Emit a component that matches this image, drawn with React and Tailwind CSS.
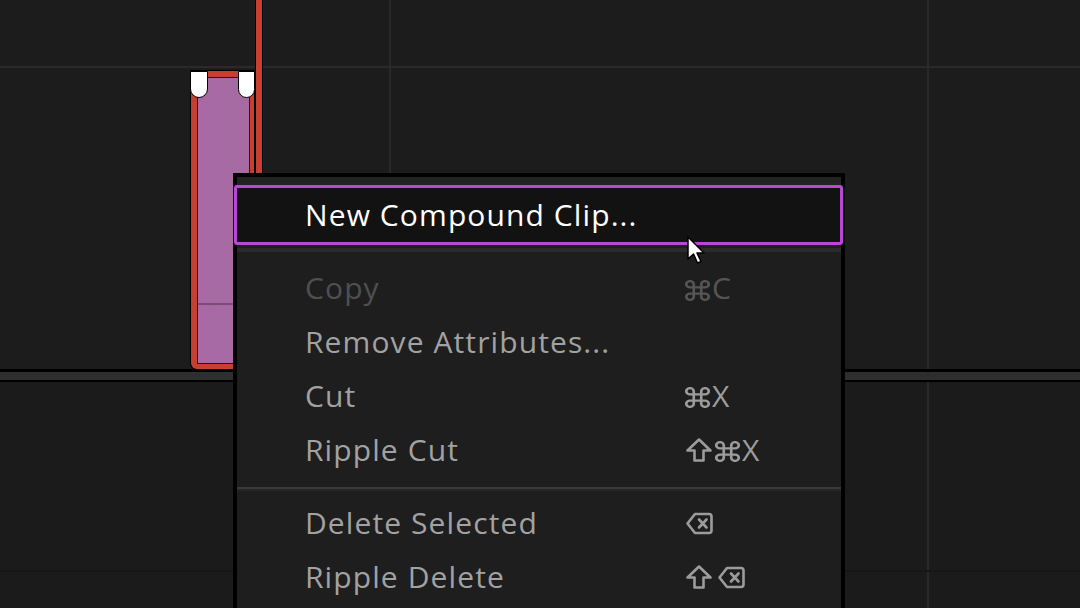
const GridCols = ({ className }) => (
  <div className={className}>
    <div className="w-[389px]" />
    <div className="w-[2px] bg-[#292929]" />
    <div className="w-[536px]" />
    <div className="w-[2px] bg-[#292929]" />
    <div className="flex-1" />
  </div>
);

// ⌘
const Cmd = ({ className }) => (
  <svg className={className} width="25" height="21" viewBox="2 2 20 20" preserveAspectRatio="none" fill="none" stroke="currentColor" strokeWidth="2.1" strokeLinecap="round" strokeLinejoin="round">
    <path d="M15 6v12a3 3 0 1 0 3-3H6a3 3 0 1 0 3 3V6a3 3 0 1 0-3 3h12a3 3 0 1 0-3-3" />
  </svg>
);

// ⇧
const Shift = ({ className }) => (
  <svg className={className} width="28" height="26" viewBox="0 0 28 26" fill="none" stroke="currentColor" strokeWidth="2.6" strokeLinejoin="round">
    <path d="M14 2.5 L25.5 13.5 L18.5 13.5 L18.5 23.5 L9.5 23.5 L9.5 13.5 L2.5 13.5 Z" />
  </svg>
);

// ⌫
const Back = ({ className }) => (
  <svg className={className} width="29" height="25" viewBox="0 0 29 25" fill="none" stroke="currentColor" strokeWidth="2.6" strokeLinecap="round" strokeLinejoin="round">
    <path d="M2.5 12.5 L10 3 H24 a2.5 2.5 0 0 1 2.5 2.5 V19.5 a2.5 2.5 0 0 1 -2.5 2.5 H10 Z" />
    <path d="M14 8.5 L21.5 16.5 M21.5 8.5 L14 16.5" />
  </svg>
);

const Item = ({ label, disabled, children }) => (
  <div className={`flex h-[54px] items-center pl-[68px] text-[30px] leading-[54px] tracking-[1.1px] ${disabled ? "text-[#4f4f4f]" : "text-[#a2a2a2]"}`}>
    <div className="w-[380px]">{label}</div>
    <div className={`flex items-center tracking-normal ${disabled ? "text-[#555555]" : "text-[#9c9c9c]"}`}>{children}</div>
  </div>
);

export default function App() {
  return (
    <div className="relative flex h-[608px] w-[1080px] flex-col overflow-hidden bg-[#1c1c1c] font-['Open_Sans','Noto_Sans',sans-serif]">
      <GridCols className="flex h-[66px]" />
      <div className="h-[2px] bg-[#2a2a2a]" />
      <GridCols className="flex h-[301px]" />
      <div className="h-[3px] bg-black" />
      <div className="h-[8px] bg-[#2e2e2e]" />
      <div className="h-[2px] bg-black" />
      <GridCols className="flex h-[188px] bg-[#1b1b1b]" />
      <div className="h-[2px] bg-[#171717]" />
      <GridCols className="flex flex-1 bg-[#1b1b1b]" />

      {/* playhead */}
      <div className="absolute left-[255px] top-0 h-[176px] w-[8px] bg-black px-[1px]">
        <div className="h-full bg-[#c7402f]" />
      </div>

      {/* clip */}
      <div className="absolute left-[190px] top-[70px] h-[300px] w-[65px] rounded-bl-[7px] bg-black p-[1px]">
        <div className="h-full rounded-bl-[6px] bg-[#c7402f] pb-[5px] pl-[6px] pr-[4px] pt-[6px]">
          <div className="flex h-full flex-col border-[1.5px] border-[#2a1226] bg-gradient-to-r from-[#a868a5] to-[#a56ba2]">
            <div className="flex-1" />
            <div className="h-[2px] bg-[#7e4b79]" />
            <div className="h-[58px]" />
          </div>
        </div>
        <div className="absolute left-0 top-[1px] h-[27px] w-[18px] rounded-b-full border border-black bg-white" />
        <div className="absolute left-[48px] top-[1px] h-[27px] w-[17px] rounded-b-full border border-black bg-white" />
      </div>

      {/* context menu */}
      <div className="absolute left-[233px] top-[173px] h-[440px] w-[612px] border-x-4 border-t-4 border-black bg-[#1e1e1e]">
        <div className="h-[8px] bg-[#222222]" />
        <div className="-ml-[3px] -mr-[2px] flex h-[60px] items-center rounded-[3px] border-[3px] border-[#b846d6] bg-[#121212] pl-[68px] text-[30px] leading-[54px] tracking-[1.1px] text-white">
          New Compound Clip...
        </div>
        <div className="mt-[3px] h-[4px] bg-[#2b2b2b]" />
        <div className="h-[9px]" />
        <Item label="Copy" disabled>
          <Cmd className="mt-[5px]" />
          <span className="ml-[2px]">C</span>
        </Item>
        <Item label="Remove Attributes..." />
        <Item label="Cut">
          <Cmd className="mt-[3px]" />
          <span className="ml-[2px]">X</span>
        </Item>
        <Item label="Ripple Cut">
          <Shift />
          <Cmd className="ml-[2px] mt-[3px]" />
          <span className="ml-[2px]">X</span>
        </Item>
        <div className="mt-[10px] h-[2px] bg-[#3a3a3a]" />
        <div className="h-[2px] bg-[#262626]" />
        <div className="h-[5px]" />
        <Item label="Delete Selected">
          <Back />
        </Item>
        <Item label="Ripple Delete">
          <Shift />
          <Back className="ml-[4px]" />
        </Item>
      </div>

      {/* mouse cursor */}
      <svg className="absolute left-[686px] top-[235px]" width="22" height="32" viewBox="0 0 22 32">
        <path d="M2 2 L2 24 L7.5 19 L11.5 28 L15 26.5 L11 18 L18 18 Z" fill="white" stroke="black" strokeWidth="1.5" strokeLinejoin="round" />
      </svg>
    </div>
  );
}
